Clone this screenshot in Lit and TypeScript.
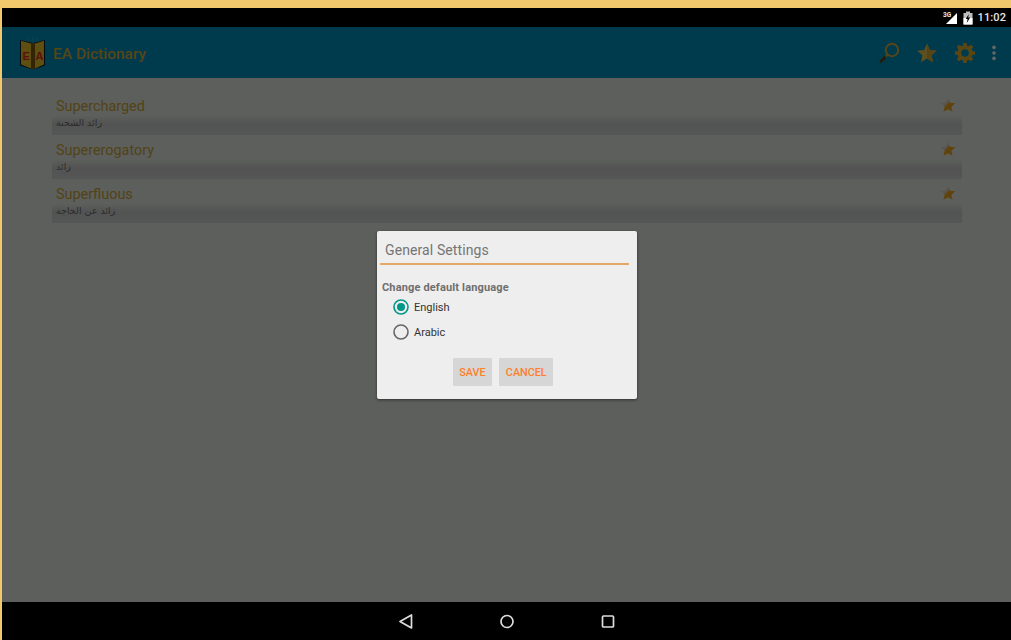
import { LitElement, html, css, svg } from "lit";
import { customElement } from "lit/decorators.js";

function gearPath(cx: number, cy: number, teeth: number, outer: number, root: number, hole: number): string {
  const pts: string[] = [];
  const step = (Math.PI * 2) / teeth;
  for (let i = 0; i < teeth; i++) {
    const a = i * step - Math.PI / 2;
    const list: [number, number][] = [
      [root, a - step * 0.36],
      [outer, a - step * 0.2],
      [outer, a + step * 0.2],
      [root, a + step * 0.36],
    ];
    for (const [r, t] of list) {
      pts.push(`${(cx + r * Math.cos(t)).toFixed(2)} ${(cy + r * Math.sin(t)).toFixed(2)}`);
    }
  }
  return `M${pts.join("L")}Z M${cx + hole} ${cy}A${hole} ${hole} 0 1 0 ${cx - hole} ${cy}A${hole} ${hole} 0 1 0 ${cx + hole} ${cy}Z`;
}

const STAR = "12,1.5 15.2,8.6 23,9.4 17.1,14.6 18.8,22.3 12,18.3 5.2,22.3 6.9,14.6 1,9.4 8.8,8.6";

const logo = svg`<svg class="logo" width="28" height="34" viewBox="0 0 28 34">
  <path d="M7 5 L11 7 M9 2 L12 6 M14 1 V6 M19 2 L16 6 M21 5 L17 7" stroke="#2a9cc4" stroke-width="1.1" fill="none"/>
  <path d="M1 4 L12 6.5 L14 7.5 L16 6.5 L26 4 V29.5 L16 33 L12 33 L1 29.5Z" fill="#06202c"/>
  <path d="M2 4.8 L12 7.6 V32.4 L2 28.4Z" fill="#ecc22a"/>
  <path d="M16 7.6 L25 4.8 V28.4 L16 32.4Z" fill="#ecc22a"/>
  <rect x="12" y="7" width="4" height="26" fill="#7a5c10"/>
  <text x="7.2" y="23.5" class="logo-e">E</text>
  <text x="20.5" y="23.5" class="logo-e">A</text>
</svg>`;

const searchIcon = svg`<svg class="ico" width="24" height="24" viewBox="0 0 24 24">
  <circle cx="15" cy="9" r="6.2" fill="none" stroke="#d8ac3c" stroke-width="2"/>
  <path d="M10.6 13.6 L8 16.4" stroke="#d8ac3c" stroke-width="2"/>
  <path d="M7.8 16.4 L3.8 20.4" stroke="#5a4a1c" stroke-width="2.8" stroke-linecap="round"/>
</svg>`;

const starIcon = svg`<svg class="ico" width="24" height="24" viewBox="-1.5 -1.5 27 27">
  <polygon points="${STAR}" fill="#ecc653"/>
  <polygon points="12,1.5 15.2,8.6 23,9.4 17.1,14.6 18.8,22.3 12,18.3" fill="#d8aa35"/>
</svg>`;

const gearIcon = svg`<svg class="ico" width="24" height="24" viewBox="0 0 24 24">
  <path fill="#dfae2e" fill-rule="evenodd" d="${gearPath(12, 12, 8, 10.2, 7.6, 3.8)}"/>
</svg>`;

const dotsIcon = svg`<svg width="6" height="16" viewBox="0 0 6 16">
  <circle cx="3" cy="2.4" r="1.8" fill="#fff"/><circle cx="3" cy="8" r="1.8" fill="#fff"/><circle cx="3" cy="13.4" r="1.8" fill="#fff"/>
</svg>`;

const listStar = svg`<svg width="16" height="16" viewBox="0 0 24 24">
  <defs><linearGradient id="ls" x1="0.1" y1="0.1" x2="0.8" y2="0.75">
    <stop offset="0.38" stop-color="#dcd8cc"/><stop offset="0.6" stop-color="#f0a81a"/></linearGradient></defs>
  <polygon points="${STAR}" fill="url(#ls)"/>
</svg>`;

const words = [
  { en: "Supercharged", ar: "زائد الشحنة" },
  { en: "Supererogatory", ar: "زائد" },
  { en: "Superfluous", ar: "زائد عن الحاجة" },
];

@customElement("app-root")
export class AppRoot extends LitElement {
  static styles = css`
    :host { display: block; width: 1011px; height: 640px; background: #f1c86c; padding: 8px 0 0 2px; box-sizing: border-box; overflow: hidden; font-family: Roboto, sans-serif; }
    .screen { position: relative; display: flex; flex-direction: column; height: 632px; }
    .status { height: 19px; background: #000; display: flex; align-items: center; justify-content: flex-end; padding-right: 5px; gap: 5px; color: #e6e6e6; font-size: 11px; font-weight: 500; flex: none; }
    .status .time { letter-spacing: 0.1px; }
    .main { position: relative; flex: 1; display: flex; flex-direction: column; min-height: 0; background: #e8eee6; }
    .toolbar { height: 51px; flex: none; background: #0094c0; display: flex; align-items: center; padding-left: 17px; }
    .logo { flex: none; }
    .logo-e { font-family: "Liberation Sans", sans-serif; font-size: 11px; font-weight: 700; fill: #e02a1e; text-anchor: middle; }
    .appname { margin-left: 6px; padding-top: 3px; font-size: 15.5px; font-weight: 500; color: #d6ac35; flex: 1; }
    .actions { display: flex; align-items: center; gap: 14px; padding-right: 14.5px; }
    .ico { display: block; }
    .dots { margin-left: -0.5px; display: flex; }
    .list { padding: 18px 49px 0 50px; display: flex; flex-direction: column; gap: 5px; }
    .row { height: 39px; position: relative; padding-left: 4px; background: linear-gradient(to bottom, transparent 50%, #cdcfce 72%, #d4d6d5 100%); box-sizing: border-box; }
    .en { font-size: 14.4px; line-height: 20px; padding-top: 1px; color: #cda838; }
    .ar { font-family: "DejaVu Sans", sans-serif; font-size: 9.5px; line-height: 14px; margin-top: -1px; color: #6e6e6e; direction: ltr; text-align: left; }
    .rowstar { position: absolute; right: 6px; top: 1px; }
    .scrim { position: absolute; inset: 0; background: rgba(0, 0, 0, 0.6); }
    .dialog { position: absolute; left: 375px; top: 204px; width: 260px; height: 168px; background: #eeeeee; border-radius: 2px; box-shadow: 0 1px 3px rgba(0,0,0,0.5); box-sizing: border-box; padding: 0 8px 0 3px; display: flex; flex-direction: column; }
    .dtitle { height: 31px; padding-top: 1px; line-height: 37px; padding-left: 5px; font-size: 14px; color: #757575; letter-spacing: 0.1px; border-bottom: 2px solid #e3a866; box-sizing: content-box; }
    .dlabel { margin: 15px 0 0 2px; font-size: 11px; line-height: 15px; font-weight: 700; color: #6f6f6f; letter-spacing: 0.15px; }
    .radios { display: flex; flex-direction: column; gap: 9px; margin: 4px 0 0 13px; }
    .radio { display: flex; align-items: center; height: 16px; gap: 5px; font-size: 11px; color: #333; }
    .btns { display: flex; justify-content: center; gap: 7px; margin-top: 18px; padding-right: 3px; }
    .btn { height: 28px; padding: 0 6.6px; background: #d6d6d6; border-radius: 1px; color: #ff7f2a; font-size: 10.8px; font-weight: 500; display: flex; align-items: center; }
    .nav { height: 38px; flex: none; background: #000; display: flex; align-items: center; justify-content: center; gap: 71px; }
    .nav svg { display: block; }
  `;

  render() {
    return html`
      <div class="screen">
        <div class="status">
          <svg width="15" height="14" viewBox="0 0 15 14">
            <text x="0" y="6" font-family="Roboto, sans-serif" font-size="6.5" font-weight="700" fill="#e6e6e6">3G</text>
            <path d="M14 2 V13 H3Z" fill="#fff"/>
          </svg>
          <svg width="10" height="14" viewBox="0 0 10 14">
            <path d="M3 0.5 H7 V2 H9.5 V13.5 H0.5 V2 H3Z" fill="#bdbdbd"/>
            <path d="M0.5 7 H9.5 V13.5 H0.5Z" fill="#fff"/>
            <path d="M5.8 3 L2.8 8 H4.6 L3.8 12 L7.2 6.6 H5.2Z" fill="#000"/>
          </svg>
          <span class="time">11:02</span>
        </div>
        <div class="main">
          <div class="toolbar">
            ${logo}
            <div class="appname">EA Dictionary</div>
            <div class="actions">
              ${searchIcon}${starIcon}${gearIcon}
              <div class="dots">${dotsIcon}</div>
            </div>
          </div>
          <div class="list">
            ${words.map(
              (w) => html`<div class="row">
                <div class="en">${w.en}</div>
                <div class="ar">${w.ar}</div>
                <div class="rowstar">${listStar}</div>
              </div>`
            )}
          </div>
          <div class="scrim"></div>
          <div class="dialog">
            <div class="dtitle">General Settings</div>
            <div class="dlabel">Change default language</div>
            <div class="radios">
              <div class="radio">
                <svg width="16" height="16" viewBox="0 0 16 16"><circle cx="8" cy="8" r="7" fill="none" stroke="#009688" stroke-width="1.6"/><circle cx="8" cy="8" r="4" fill="#009688"/></svg>
                <span>English</span>
              </div>
              <div class="radio">
                <svg width="16" height="16" viewBox="0 0 16 16"><circle cx="8" cy="8" r="7" fill="none" stroke="#666" stroke-width="1.6"/></svg>
                <span>Arabic</span>
              </div>
            </div>
            <div class="btns"><div class="btn">SAVE</div><div class="btn">CANCEL</div></div>
          </div>
        </div>
        <div class="nav">
          <svg width="30" height="20" viewBox="0 0 30 20"><path d="M20.5 4 V17 L9 10.5Z" fill="none" stroke="#ddd" stroke-width="1.7" stroke-linejoin="round"/></svg>
          <svg width="30" height="20" viewBox="0 0 30 20"><circle cx="15" cy="10.5" r="6" fill="none" stroke="#ddd" stroke-width="1.7"/></svg>
          <svg width="30" height="20" viewBox="0 0 30 20"><rect x="9.5" y="5" width="11" height="11" rx="1" fill="none" stroke="#ddd" stroke-width="1.7"/></svg>
        </div>
      </div>
    `;
  }
}
